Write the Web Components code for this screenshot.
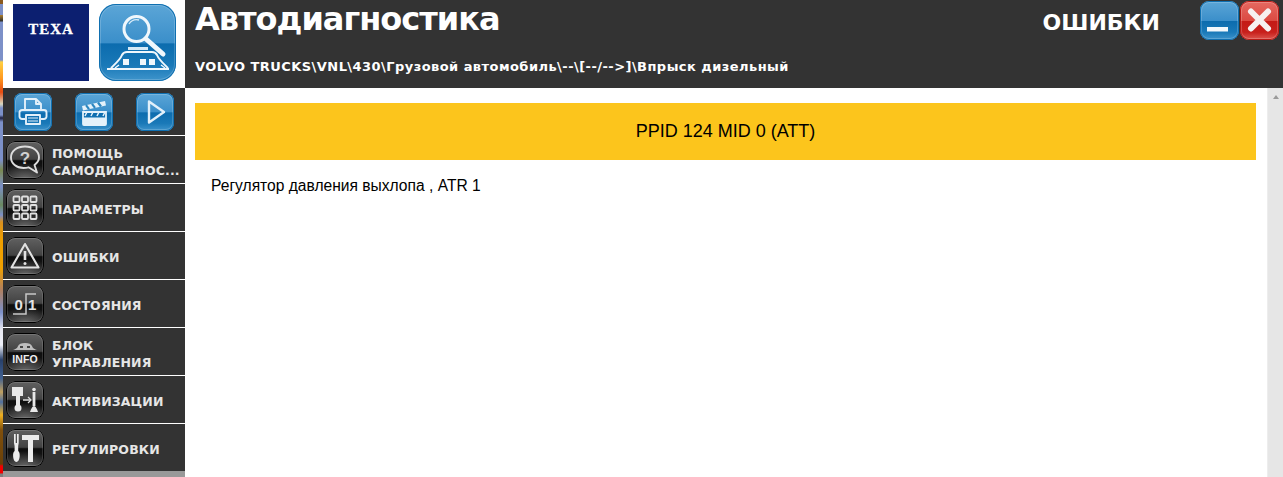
<!DOCTYPE html>
<html>
<head>
<meta charset="utf-8">
<title>Автодиагностика</title>
<style>
  html, body { margin: 0; padding: 0; height: 100%; overflow: hidden; background: #fff; }
</style>
</head>
<body>
<texa-app>
  <logo-pane slot="logo"></logo-pane>
  <top-bar slot="top" heading="Автодиагностика" section="ОШИБКИ" path="VOLVO TRUCKS\VNL\430\Грузовой автомобиль\--\[--/-->]\Впрыск дизельный"></top-bar>
  <side-nav slot="nav">
    <tool-row>
      <gloss-icon tone="blue"><svg viewBox="0 0 38 38" fill="none" stroke="#e2f0fa" stroke-width="1.900" stroke-linejoin="round"><path d="M11 17V6h11l5 5v6"/><path d="M22 6v5h5"/><path d="M11 26H8a2.500 2.500 0 0 1-2.500-2.500v-4A2.500 2.500 0 0 1 8 17h22a2.500 2.500 0 0 1 2.500 2.500v4A2.500 2.500 0 0 1 30 26h-3"/><path d="M12 22h14v9H12z"/><path d="M14 25h10M14 28h10" stroke-width="1"/></svg></gloss-icon>
      <gloss-icon tone="blue"><svg viewBox="0 0 38 38" fill="none"><path d="M8 19h23v12a1 1 0 0 1-1 1H9a1 1 0 0 1-1-1z" fill="none" stroke="#e4f1fa" stroke-width="1.800"/><path d="M8 24.500h23v7H8z" fill="#e4f1fa"/><path d="M7 13l23-5 1 4.500-23 5z" fill="#e4f1fa"/><path d="M11 12.200l3 4M17 10.800l3 4M23 9.500l3 4" stroke="#2c86c0" stroke-width="2.200"/><path d="M12 19l-2 4M18 19l-2 4M24 19l-2 4M30 19l-2 4" stroke="#e4f1fa" stroke-width="1.500"/></svg></gloss-icon>
      <gloss-icon tone="blue"><svg viewBox="0 0 38 38" fill="none"><path d="M13 8.500L28 19 13 29.500z" stroke="#e2f0fa" stroke-width="2.400" stroke-linejoin="round"/></svg></gloss-icon>
    </tool-row>
    <nav-item label="ПОМОЩЬ САМОДИАГНОС...">
      <svg slot="icon" viewBox="0 0 38 38" fill="none"><path d="M19 5.500C11 5.500 5 10 5 16.500c0 6 5.500 10.500 12.500 10.500 2 0 3.500-.2 5-.7L31 31.500 28.500 24C31 22 33 19.500 33 16.500 33 10 27 5.500 19 5.500z" stroke="#dcdcdc" stroke-width="1.900" stroke-linejoin="round"/><text x="19" y="23" text-anchor="middle" font-family="Liberation Sans" font-size="17" font-weight="700" fill="#d0d0d0">?</text></svg>
    </nav-item>
    <nav-item label="ПАРАМЕТРЫ">
      <svg slot="icon" viewBox="0 0 38 38" fill="none" stroke="#e0e0e0" stroke-width="1.800"><rect x="7.500" y="7.500" width="6" height="5.500" rx="1"/><rect x="16" y="7.500" width="6" height="5.500" rx="1"/><rect x="24.500" y="7.500" width="6" height="5.500" rx="1"/><rect x="7.500" y="16" width="6" height="5.500" rx="1"/><rect x="16" y="16" width="6" height="5.500" rx="1"/><rect x="24.500" y="16" width="6" height="5.500" rx="1"/><rect x="7.500" y="24.500" width="6" height="5.500" rx="1"/><rect x="16" y="24.500" width="6" height="5.500" rx="1"/><rect x="24.500" y="24.500" width="6" height="5.500" rx="1"/></svg>
    </nav-item>
    <nav-item label="ОШИБКИ">
      <svg slot="icon" viewBox="0 0 38 38" fill="none"><path d="M19 7L32.500 30.500H5.500z" stroke="#e2e2e2" stroke-width="2.100" stroke-linejoin="round"/><path d="M19 14v9" stroke="#e2e2e2" stroke-width="2.600"/><circle cx="19" cy="26.500" r="1.500" fill="#e2e2e2"/></svg>
    </nav-item>
    <nav-item label="СОСТОЯНИЯ">
      <svg slot="icon" viewBox="0 0 38 38" fill="none"><path d="M7 29h13V9h10" stroke="#c8c8c8" stroke-width="1.500"/><text x="8.500" y="25" font-family="Liberation Sans" font-size="15" fill="#e4e4e4">0</text><text x="22" y="25" font-family="Liberation Sans" font-size="15" fill="#e4e4e4">1</text></svg>
    </nav-item>
    <nav-item label="БЛОК УПРАВЛЕНИЯ">
      <svg slot="icon" viewBox="0 0 38 38" fill="none"><path d="M7 17c2-1 4-1 5-4 1-2 3-3 7-3s6 1 7 3c1 3 3 3 5 4z" fill="#bdbdbd"/><path d="M14 13h3v2h-3zM21 13h3v2h-3z" fill="#444"/><text x="19" y="30" text-anchor="middle" font-family="Liberation Sans" font-size="10.500" font-weight="700" fill="#eee">INFO</text></svg>
    </nav-item>
    <nav-item label="АКТИВИЗАЦИИ">
      <svg slot="icon" viewBox="0 0 38 38" fill="none"><path d="M6 6h11v9h-3v9h-4v-9H6z" fill="#e8e8e8"/><circle cx="12" cy="27" r="3.500" fill="#e8e8e8"/><path d="M17 19h7" stroke="#dedede" stroke-width="1.500"/><path d="M22 16l3 3-3 3" stroke="#dedede" stroke-width="1.300"/><path d="M28 11v14" stroke="#e8e8e8" stroke-width="2.800"/><circle cx="28" cy="8.500" r="1.800" fill="#e8e8e8"/><path d="M24 31c1-3 2.500-6 4-6s3 3 4 6z" fill="#e8e8e8"/></svg>
    </nav-item>
    <nav-item label="РЕГУЛИРОВКИ">
      <svg slot="icon" viewBox="0 0 38 38" fill="none"><path d="M16 6h17v5h-6v22h-5V11h-6z" fill="#ececec"/><path d="M8 5h1.700v9H8zM11 5h1.700v9H11z" fill="#ececec"/><path d="M8 14h4.700l-.5 3v5c1.500 1 1.500 3 1.500 5s-1 6-3.300 6-3.300-4-3.300-6 0-4 1.500-5v-5z" fill="#ececec"/></svg>
    </nav-item>
  </side-nav>
  <fault-view slot="main" code="PPID 124 MID 0 (ATT)" description="Регулятор давления выхлопа , ATR 1"></fault-view>
</texa-app>

<script>
// app frame: desktop sliver on the left, then logo/top bar over nav/content
class TexaApp extends HTMLElement {
  constructor() {
    super();
    this.attachShadow({ mode: 'open' }).innerHTML = `
      <style>
        :host {
          display: grid;
          grid-template-columns: 3px 182px 1fr;
          grid-template-rows: 88px 389px;
          width: 1283px;
          height: 477px;
          overflow: hidden;
          background: #fff;
        }
        .desk {
          grid-row: 1 / 3;
          background: linear-gradient(180deg,
            #8a5a20 0, #8a5a20 4px, #7c90c8 4px, #7c90c8 15px, #b08030 15px, #30302a 21px, #7c90c8 22px,
            #7c90c8 60px, #ffd040 62px, #ff9a20 78px, #e84a10 92px, #d8d8c0 104px, #7c90c8 108px,
            #7c90c8 115px, #202040 118px, #7c90c8 122px, #7c90c8 160px, #7a8a50 170px, #7c90c8 186px,
            #6a8a60 205px, #7c90c8 215px, #d89020 222px, #f0a000 240px, #f0a000 268px, #b08060 290px,
            #7c90c8 312px, #e8e8f0 330px, #eef0f8 345px, #28406a 360px, #406090 378px, #c0a060 392px,
            #5070a0 402px, #f0b020 415px, #80500c 430px, #6a4008 464px, #f00000 466px, #f00000 473px, #808080 474px);
        }
      </style>
      <div class="desk"></div>
      <slot name="logo"></slot>
      <slot name="top"></slot>
      <slot name="nav"></slot>
      <slot name="main"></slot>`;
  }
}

class LogoPane extends HTMLElement {
  constructor() {
    super();
    this.attachShadow({ mode: 'open' }).innerHTML = `
      <style>
        :host {
          display: flex;
          align-items: flex-start;
          gap: 10px;
          padding: 4px 0 0 10px;
          box-sizing: border-box;
          background: #fff;
        }
        .brand {
          width: 76px;
          height: 77px;
          box-sizing: border-box;
          padding-top: 16px;
          background: #0c1f70;
          color: #fff;
          text-align: center;
          font: 900 15px/18px "Liberation Serif", serif;
          letter-spacing: .9px;
          -webkit-text-stroke: .3px #fff;
        }
        gloss-icon { --size: 77px; --radius: 17px; }
      </style>
      <div class="brand">TEXA</div>
      <gloss-icon tone="blue">
        <svg viewBox="0 0 77 77" fill="none">
          <circle cx="37.500" cy="25" r="12.500" stroke="#f0f7fc" stroke-width="3"/>
          <path d="M30 20c2-3 6-5 10-4" stroke="#d6eaf7" stroke-width="1.300"/>
          <path d="M47 35L64 50" stroke="#f0f7fc" stroke-width="5" stroke-linecap="round"/>
          <path d="M8 65H70" stroke="#f0f7fc" stroke-width="2.200"/>
          <path d="M12 64C16 60 21 56 23 51c1-2 2-3 5-3h25c3 0 4 1 5 3 2 5 7 9 11 13" stroke="#f0f7fc" stroke-width="2"/>
          <path d="M29 46h20v-3H29z" fill="#d6eaf7"/>
          <path d="M24 55h6v6h-6zM41 55h6v6h-6zM50 55h6v6h-6z" fill="#f0f7fc"/>
          <path d="M16 64l4-3M62 61l4 3" stroke="#f0f7fc" stroke-width="1.300"/>
        </svg>
      </gloss-icon>`;
  }
}

class TopBar extends HTMLElement {
  constructor() {
    super();
    this.attachShadow({ mode: 'open' }).innerHTML = `
      <style>
        :host {
          display: flex;
          align-items: flex-start;
          padding: 1px 4px 0 10px;
          box-sizing: border-box;
          background: #333;
          color: #fff;
          font-family: "DejaVu Sans", Verdana, sans-serif;
          font-weight: bold;
        }
        .titles { flex: 1; min-width: 0; }
        h1 { margin: 0; font-size: 32px; line-height: 36px; font-weight: bold; letter-spacing: -1px; }
        .path { margin-top: 22px; font-size: 13px; line-height: 16px; letter-spacing: .45px; white-space: nowrap; }
        .section { margin: 8px 40px 0 0; font-size: 22px; line-height: 28px; }
        .buttons { display: flex; gap: 1px; }
        gloss-icon { --size: 39px; --radius: 9px; }
      </style>
      <div class="titles">
        <h1></h1>
        <div class="path"></div>
      </div>
      <div class="section"></div>
      <div class="buttons">
        <gloss-icon tone="blue"><svg viewBox="0 0 39 39"><path d="M7 26h21v4.500H7z" fill="#f2f8fc"/></svg></gloss-icon>
        <gloss-icon tone="red"><svg viewBox="0 0 39 39" fill="none"><path d="M11 10.500l17 17M28 10.500l-17 17" stroke="#f6f0f0" stroke-width="6" stroke-linecap="round"/></svg></gloss-icon>
      </div>`;
    this.shadowRoot.querySelector('h1').textContent = this.getAttribute('heading');
    this.shadowRoot.querySelector('.path').textContent = this.getAttribute('path');
    this.shadowRoot.querySelector('.section').textContent = this.getAttribute('section');
  }
}

class SideNav extends HTMLElement {
  constructor() {
    super();
    this.attachShadow({ mode: 'open' }).innerHTML = `
      <style>
        :host {
          display: flex;
          flex-direction: column;
          overflow: hidden;
          background: #999;
        }
      </style>
      <slot></slot>`;
  }
}

class ToolRow extends HTMLElement {
  constructor() {
    super();
    this.attachShadow({ mode: 'open' }).innerHTML = `
      <style>
        :host {
          display: grid;
          grid-template-columns: repeat(3, 1fr);
          justify-items: center;
          align-items: start;
          height: 47px;
          padding-top: 5px;
          box-sizing: border-box;
          background: #333;
        }
        ::slotted(gloss-icon) { --size: 38px; --radius: 8px; }
      </style>
      <slot></slot>`;
  }
}

class NavItem extends HTMLElement {
  constructor() {
    super();
    this.attachShadow({ mode: 'open' }).innerHTML = `
      <style>
        :host {
          display: flex;
          align-items: center;
          gap: 8px;
          flex: none;
          height: 47px;
          padding-left: 3px;
          border-top: 1px solid #fff;
          background: #333;
          color: #e6e6e6;
          font: bold 12.500px/16.500px "DejaVu Sans", Verdana, sans-serif;
          letter-spacing: .15px;
        }
        gloss-icon { --size: 38px; --radius: 9px; flex: none; margin-top: 1px; }
        .label { min-width: 0; padding-top: 6px; }
      </style>
      <gloss-icon tone="dark"><slot name="icon"></slot></gloss-icon>
      <div class="label"></div>`;
    this.shadowRoot.querySelector('.label').textContent = this.getAttribute('label');
  }
}

// glossy rounded tile, used for the blue, red and black icons
class GlossIcon extends HTMLElement {
  constructor() {
    super();
    this.attachShadow({ mode: 'open' }).innerHTML = `
      <style>
        :host {
          display: block;
          position: relative;
          width: var(--size, 38px);
          height: var(--size, 38px);
          box-sizing: border-box;
          border-radius: var(--radius, 8px);
          overflow: hidden;
        }
        :host([tone="blue"]) {
          background: linear-gradient(180deg, #5ca6d7 0, #3b8fca 50%, #0c6cae 52%, #1a79b8 80%, #3f95cc 100%);
          box-shadow: inset 0 0 0 1px #0f6fb0, inset 0 0 0 2px rgba(255,255,255,.18);
        }
        :host([tone="red"]) {
          background: linear-gradient(180deg, #e66a62 0, #db4a42 50%, #c41a16 52%, #c8201c 80%, #de5a52 100%);
          box-shadow: inset 0 0 0 1px #b81a16, inset 0 0 0 2px rgba(255,255,255,.2);
        }
        :host([tone="dark"]) {
          background:
            radial-gradient(ellipse 75% 42% at 50% 100%, rgba(125,125,125,.8), rgba(125,125,125,0) 100%),
            linear-gradient(180deg, #626262 0, #424242 48%, #0e0e0e 52%, #1c1c1c 100%);
          box-shadow: inset 0 0 0 1px #000, inset 0 0 0 2px rgba(255,255,255,.14);
        }
        ::slotted(svg), svg { display: block; width: 100%; height: 100%; }
      </style>
      <slot></slot>`;
  }
}

class FaultView extends HTMLElement {
  constructor() {
    super();
    this.attachShadow({ mode: 'open' }).innerHTML = `
      <style>
        :host {
          display: flex;
          background: #fff;
          color: #000;
          font: 15.600px/19px "Liberation Sans", Arial, sans-serif;
        }
        .body { flex: 1; min-width: 0; padding: 15px 11px 0 10px; }
        .code {
          height: 57px;
          display: flex;
          align-items: center;
          justify-content: center;
          background: #fcc51c;
          font-size: 18px;
        }
        .desc { padding: 16px 16px 0; }
      </style>
      <div class="body">
        <div class="code"></div>
        <div class="desc"></div>
      </div>
      <fake-scrollbar></fake-scrollbar>`;
    this.shadowRoot.querySelector('.code').textContent = this.getAttribute('code');
    this.shadowRoot.querySelector('.desc').textContent = this.getAttribute('description');
  }
}

class FakeScrollbar extends HTMLElement {
  constructor() {
    super();
    this.attachShadow({ mode: 'open' }).innerHTML = `
      <style>
        :host {
          display: flex;
          justify-content: center;
          flex: none;
          width: 16px;
          padding-top: 7px;
          box-sizing: border-box;
          background: #e6e6e6;
          border-left: 1px solid #ededed;
        }
        i { width: 0; height: 0; border: 3.500px solid transparent; border-top: 0; border-bottom: 4px solid #9a9a9a; }
      </style>
      <i></i>`;
  }
}

customElements.define('gloss-icon', GlossIcon);
customElements.define('fake-scrollbar', FakeScrollbar);
customElements.define('logo-pane', LogoPane);
customElements.define('top-bar', TopBar);
customElements.define('tool-row', ToolRow);
customElements.define('nav-item', NavItem);
customElements.define('side-nav', SideNav);
customElements.define('fault-view', FaultView);
customElements.define('texa-app', TexaApp);
</script>
</body>
</html>
